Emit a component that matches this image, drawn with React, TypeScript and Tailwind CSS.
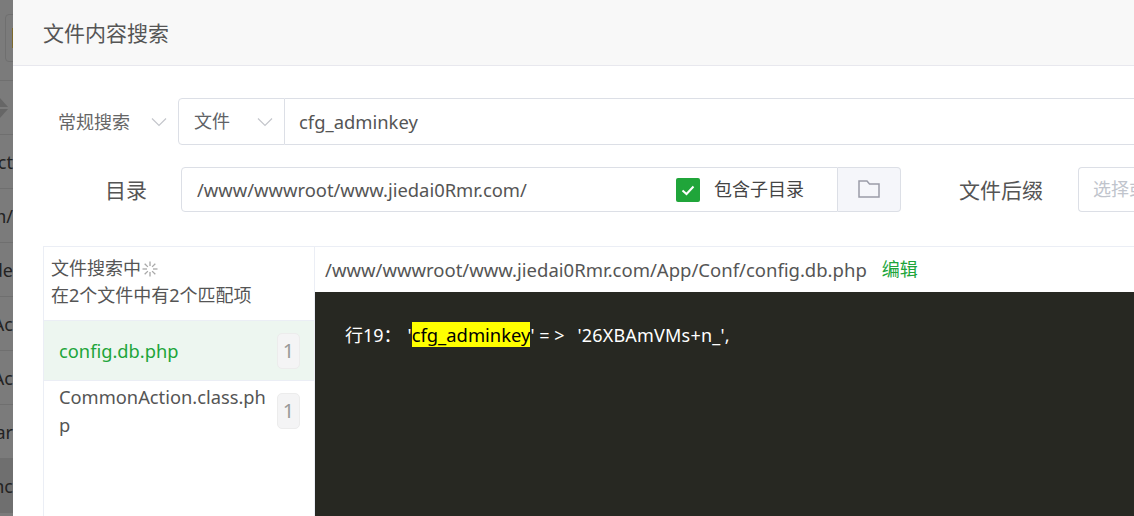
import React from "react";

const F = { fontFamily: '"Noto Sans","Noto Sans CJK SC",sans-serif' };

function Chevron() {
  return (
    <svg width="16" height="10" viewBox="0 0 16 10" fill="none" stroke="#c4c6cc" strokeWidth="1.2">
      <path d="M1 1.5 L8 8.5 L15 1.5" />
    </svg>
  );
}

function Spinner() {
  const rays = [0, 45, 90, 135, 180, 225, 270, 315];
  return (
    <svg width="18" height="18" viewBox="0 0 18 18" stroke="#a8a8a8" strokeWidth="1.3">
      {rays.map((a) => (
        <line key={a} x1="9" y1="1.5" x2="9" y2="6" transform={`rotate(${a} 9 9)`} />
      ))}
    </svg>
  );
}

function Badge() {
  return (
    <span className="flex h-[36px] w-[23px] shrink-0 items-center justify-center rounded-[5px] border border-[#ececec] bg-[#f4f4f5] text-[20px] text-[#999]">
      1
    </span>
  );
}

export default function App() {
  return (
    <div className="flex h-[516px] w-[1134px] overflow-hidden bg-[#7b7b7b]" style={F}>
      <div className="w-[13px] shrink-0 overflow-hidden text-[18px] text-[#222]">
        <div className="flex h-[81px] items-start border-b border-[#6f6f6f]">
          <div className="mt-[14px] ml-[5px] flex h-[48px] w-[20px] shrink-0 items-center rounded-[4px] border border-[#6f6f6f] pl-[6px]">
            <div className="h-[20px] w-[2px] bg-[#7d6a2c]" />
          </div>
        </div>
        <div className="flex h-[54px] items-center border-b border-[#6f6f6f]">
          <svg width="8" height="24" viewBox="0 0 8 24" fill="#666666">
            <path d="M0 2 L8 11 H0 Z" />
            <path d="M0 22 L8 13 H0 Z" />
          </svg>
        </div>
        {["ct", "m/", "de", "Ac", "Ac", "ar"].map((t, i) => (
          <div key={i} className="flex h-[54px] items-center justify-end border-b border-[#6f6f6f] leading-none whitespace-nowrap">
            {t}
          </div>
        ))}
        <div className="flex h-[54px] items-center justify-end bg-[#6f6f6f] leading-none whitespace-nowrap">nc</div>
      </div>
      <div className="flex min-w-0 flex-1 flex-col rounded-tl-[5px] bg-white text-[#555]">
        <div className="flex h-[66px] shrink-0 items-center border-b border-[#e8e8ee] bg-[#f8f8f8] pt-[2px] pl-[30px] text-[21px] text-[#555]">
          文件内容搜索
        </div>
        <div className="flex flex-col pl-[30px]">
          <div className="mt-[32px] flex h-[47px] items-center">
            <div className="flex w-[135px] shrink-0 items-center pl-[15px] text-[18px] text-[#666]">
              <span className="w-[93px] shrink-0 pt-[2px]">常规搜索</span>
              <Chevron />
            </div>
            <div className="flex h-[47px] w-[107px] shrink-0 items-center rounded-l-[4px] border border-[#dcdfe6] pl-[15px] text-[18px] text-[#606266]">
              <span className="w-[63px] shrink-0">文件</span>
              <Chevron />
            </div>
            <div className="flex h-[47px] flex-1 items-center border-y border-[#dcdfe6] pt-[1px] pl-[14px] text-[18.4px] text-[#555]">
              cfg_adminkey
            </div>
          </div>
          <div className="mt-[22px] flex h-[45px] items-center">
            <div className="w-[104px] shrink-0 pt-[2px] text-right text-[21px] text-[#555]">目录</div>
            <div className="ml-[34px] flex h-[45px] w-[657px] shrink-0 items-center rounded-l-[4px] border border-[#dcdfe6] pl-[15px] text-[18.4px] text-[#555]">
              <span className="w-[479px] shrink-0">/www/wwwroot/www.jiedai0Rmr.com/</span>
              <span className="flex h-[24px] w-[24px] shrink-0 items-center justify-center rounded-[2px] bg-[#20a53a]">
                <svg width="16" height="16" viewBox="0 0 16 16" fill="none" stroke="#fff" strokeWidth="2">
                  <path d="M2.5 8.5 L6.5 12 L13.5 4.5" />
                </svg>
              </span>
              <span className="ml-[14px] text-[18px] text-[#444]">包含子目录</span>
            </div>
            <div className="flex h-[45px] w-[63px] shrink-0 items-center justify-center rounded-r-[4px] border border-l-0 border-[#dcdfe6] bg-[#f5f6fa]">
              <svg className="mb-[2px]" width="22" height="18" viewBox="0 0 22 18" fill="none" stroke="#9a9ca8" strokeWidth="1.5">
                <path d="M1 1 H9 L11.5 4 H21 V17 H1 Z" />
              </svg>
            </div>
            <div className="ml-[58px] w-[119px] shrink-0 pt-[2px] text-[21px] text-[#555]">文件后缀</div>
            <div className="flex h-[45px] flex-1 items-center rounded-l-[4px] border border-r-0 border-[#dcdfe6] pl-[14px] text-[18px] whitespace-nowrap text-[#c0c4cc]">
              选择或
            </div>
          </div>
          <div className="mt-[34px] flex h-[270px] border-t border-l border-[#ebeef5]">
            <div className="flex w-[271px] shrink-0 flex-col border-r border-[#ebeef5]">
              <div className="h-[74px] border-b border-[#ebeef5] pt-[8px] pl-[7px] text-[18px] leading-[27px] text-[#555]">
                <div className="flex items-center">
                  文件搜索中
                  <Spinner />
                </div>
                <div>在2个文件中有2个匹配项</div>
              </div>
              <div className="flex h-[60px] items-center justify-between border-b border-[#ebeef5] bg-[#edf6f0] pr-[14px] pl-[15px] text-[18.3px] text-[#20a53a]">
                <span>config.db.php</span>
                <Badge />
              </div>
              <div className="flex items-start justify-between pt-[2px] pr-[14px] pl-[15px] text-[18.3px] leading-[28px] text-[#555]">
                <span className="w-[210px] break-all">CommonAction.class.php</span>
                <span className="mt-[10px]">
                  <Badge />
                </span>
              </div>
            </div>
            <div className="flex min-w-0 flex-1 flex-col">
              <div className="flex h-[45px] shrink-0 items-center pl-[10px] text-[18.5px] whitespace-nowrap text-[#555]">
                /www/wwwroot/www.jiedai0Rmr.com/App/Conf/config.db.php
                <span className="ml-[15px] text-[18px] text-[#20a53a]">编辑</span>
              </div>
              <div className="flex-1 bg-[#272822] pt-[29px] pl-[30px] text-[18px] whitespace-nowrap text-white">
                <span>行19：</span>
                <span className="ml-[6px]">'</span>
                <span className="bg-[#ffff00] text-[18.4px] text-black">cfg_adminkey</span>
                <span className="inline-block w-[47px]">' = &gt;</span>
                <span className="tracking-[0.2px]">'26XBAmVMs+n_',</span>
              </div>
            </div>
          </div>
        </div>
      </div>
    </div>
  );
}
